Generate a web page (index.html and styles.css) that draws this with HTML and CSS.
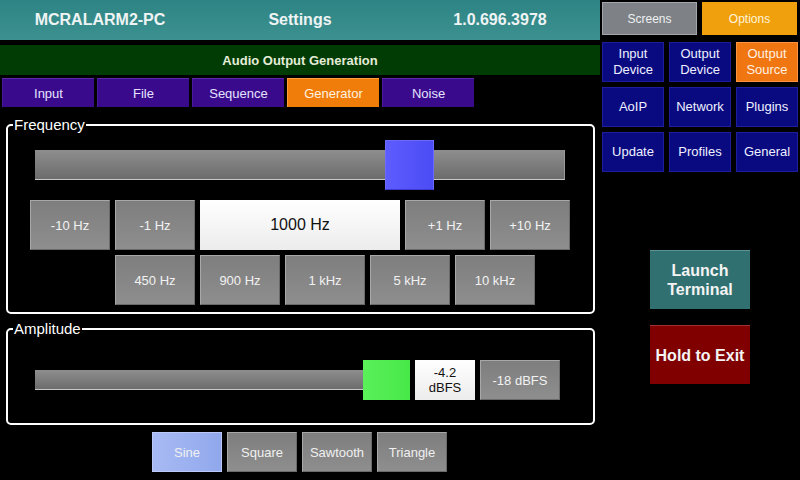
FILE: index.html
```html
<!DOCTYPE html>
<html>
<head>
<meta charset="utf-8">
<link rel="stylesheet" href="styles.css">
</head>
<body>
<div class="screen">
  <div class="left">
    <div class="header">
      <div class="hcell">MCRALARM2-PC</div>
      <div class="hcell">Settings</div>
      <div class="hcell">1.0.696.3978</div>
    </div>
    <div class="subtitle">Audio Output Generation</div>
    <div class="tabs">
      <div class="tab">Input</div>
      <div class="tab">File</div>
      <div class="tab">Sequence</div>
      <div class="tab active">Generator</div>
      <div class="tab">Noise</div>
    </div>
    <fieldset class="group freq">
      <legend>Frequency</legend>
      <div class="slider freq-slider">
        <div class="track"></div>
        <div class="thumb blue" style="left:350px"></div>
      </div>
      <div class="btn-row row1">
        <div class="gbtn">-10 Hz</div>
        <div class="gbtn">-1 Hz</div>
        <div class="valbox">1000 Hz</div>
        <div class="gbtn">+1 Hz</div>
        <div class="gbtn">+10 Hz</div>
      </div>
      <div class="btn-row row2">
        <div class="gbtn">450 Hz</div>
        <div class="gbtn">900 Hz</div>
        <div class="gbtn">1 kHz</div>
        <div class="gbtn">5 kHz</div>
        <div class="gbtn">10 kHz</div>
      </div>
    </fieldset>
    <fieldset class="group amp">
      <legend>Amplitude</legend>
      <div class="amp-row">
        <div class="slider amp-slider">
          <div class="track"></div>
          <div class="thumb green"></div>
        </div>
        <div class="dbbox">-4.2<br>dBFS</div>
        <div class="gbtn db">-18 dBFS</div>
      </div>
    </fieldset>
    <div class="waves">
      <div class="wbtn sel">Sine</div>
      <div class="wbtn">Square</div>
      <div class="wbtn">Sawtooth</div>
      <div class="wbtn">Triangle</div>
    </div>
  </div>
  <div class="right">
    <div class="topbtns">
      <div class="tbtn screens">Screens</div>
      <div class="tbtn options">Options</div>
    </div>
    <div class="grid">
      <div class="nbtn">Input<br>Device</div>
      <div class="nbtn">Output<br>Device</div>
      <div class="nbtn on">Output<br>Source</div>
      <div class="nbtn">AoIP</div>
      <div class="nbtn">Network</div>
      <div class="nbtn">Plugins</div>
      <div class="nbtn">Update</div>
      <div class="nbtn">Profiles</div>
      <div class="nbtn">General</div>
    </div>
    <div class="actions">
      <div class="abtn launch">Launch<br>Terminal</div>
      <div class="abtn exit">Hold to Exit</div>
    </div>
  </div>
</div>
</body>
</html>
```

FILE: styles.css
```css
* { box-sizing: border-box; }
html, body {
  margin: 0;
  padding: 0;
  background: #000;
}
body {
  font-family: "Liberation Sans", Arial, sans-serif;
  color: #fff;
}
.screen {
  width: 800px;
  height: 480px;
  display: flex;
  overflow: hidden;
  background: #000;
}
.left {
  width: 600px;
  display: flex;
  flex-direction: column;
}
.header {
  height: 40px;
  display: grid;
  grid-template-columns: 200px 200px 200px;
  background: linear-gradient(#2e8484, #3c9090);
}
.hcell {
  display: flex;
  align-items: center;
  justify-content: center;
  font-weight: bold;
  font-size: 16px;
  color: #eef4f4;
}
.subtitle {
  margin-top: 5px;
  height: 30px;
  background: #003c04;
  display: flex;
  align-items: center;
  justify-content: center;
  font-weight: bold;
  font-size: 13px;
  color: #e6ecd8;
}
.tabs {
  margin-top: 3px;
  height: 29px;
  display: flex;
  gap: 3px;
  padding-left: 2px;
}
.tab {
  width: 92px;
  background: #3a0a8c;
  border-top: 1px solid #5a2aa8;
  border-left: 1px solid #4a1a9c;
  display: flex;
  align-items: center;
  justify-content: center;
  font-size: 13px;
  color: #e4e4ff;
}
.tab.active {
  background: #f07d0a;
  border-top-color: #ffa040;
  border-left-color: #ff9a38;
  color: #fff2e0;
}
.group {
  margin: 0 0 0 6px;
  width: 589px;
  border: 2px solid #fff;
  border-radius: 5px;
  padding: 0;
  min-inline-size: 0;
}
.group legend {
  font-size: 15px;
  line-height: 16px;
  padding: 0 1px;
  margin-left: 5px;
  color: #fff;
}
.freq {
  margin-top: 10px;
  height: 197px;
}
.slider {
  position: relative;
}
.freq-slider {
  margin: 7px 0 0 27px;
  width: 530px;
  height: 50px;
  display: flex;
  align-items: center;
}
.track {
  width: 100%;
  background: linear-gradient(#8e8e8e, #6c6c6c);
  border-bottom: 1px solid #c8c8c8;
  border-right: 1px solid #9a9a9a;
}
.freq-slider .track { height: 30px; }
.thumb {
  position: absolute;
  top: 0;
}
.thumb.blue {
  width: 49px;
  height: 50px;
  background: linear-gradient(90deg, #5c5cff, #4c4cf4);
  border: 1px solid #6a6aff;
  border-bottom-color: #3a3ad0;
}
.btn-row {
  display: flex;
  gap: 5px;
}
.row1 {
  margin: 10px 0 0 22px;
}
.row2 {
  margin: 5px 0 0 107px;
}
.gbtn {
  width: 80px;
  height: 50px;
  background: linear-gradient(#7e7e7e, #8e8e8e);
  border: 1px solid #a8a8a8;
  border-right-color: #6a6a6a;
  border-bottom-color: #6a6a6a;
  display: flex;
  align-items: center;
  justify-content: center;
  font-size: 13px;
  color: #f2f2f2;
}
.valbox {
  width: 200px;
  height: 50px;
  background: linear-gradient(#ffffff, #ececec);
  display: flex;
  align-items: center;
  justify-content: center;
  font-size: 16px;
  color: #111;
}
.amp {
  margin-top: 7px;
  height: 104px;
}
.amp-row {
  margin: 23px 0 0 27px;
  display: flex;
  gap: 5px;
  height: 40px;
}
.amp-slider {
  width: 375px;
  height: 40px;
  display: flex;
  align-items: center;
}
.amp-slider .track { height: 20px; }
.thumb.green {
  right: 0;
  width: 47px;
  height: 40px;
  background: linear-gradient(90deg, #5af05a, #48e848);
}
.dbbox {
  width: 60px;
  height: 40px;
  background: linear-gradient(#ffffff, #ececec);
  color: #111;
  font-size: 13px;
  line-height: 15px;
  display: flex;
  align-items: center;
  justify-content: center;
  text-align: center;
}
.gbtn.db {
  height: 40px;
}
.waves {
  margin-top: 7px;
  display: flex;
  justify-content: center;
  gap: 5px;
  padding-right: 1px;
}
.wbtn {
  width: 70px;
  height: 40px;
  background: linear-gradient(#7e7e7e, #8e8e8e);
  border: 1px solid #a8a8a8;
  border-right-color: #6a6a6a;
  border-bottom-color: #6a6a6a;
  display: flex;
  align-items: center;
  justify-content: center;
  font-size: 13px;
  color: #f0f0f0;
}
.wbtn.sel {
  background: linear-gradient(90deg, #a8baf4, #90a8ec);
  border-color: #bcc8f8;
}
.right {
  width: 200px;
  padding: 2px 0 0 2px;
  display: flex;
  flex-direction: column;
}
.topbtns {
  display: flex;
  gap: 5px;
  height: 33px;
}
.tbtn {
  width: 95px;
  display: flex;
  align-items: center;
  justify-content: center;
  font-size: 12px;
}
.tbtn.screens {
  background: #7e8286;
  border: 1px solid #a2a6aa;
  color: #eef0f2;
}
.tbtn.options {
  background: #f0a00c;
  color: #fff4dc;
}
.grid {
  margin-top: 7px;
  display: grid;
  grid-template-columns: 62px 62px 62px;
  grid-auto-rows: 40px;
  gap: 5px;
}
.nbtn {
  background: #0a0a80;
  border: 1px solid #1e1e9c;
  display: flex;
  align-items: center;
  justify-content: center;
  text-align: center;
  font-size: 13px;
  line-height: 16px;
  color: #eef0ff;
}
.nbtn.on {
  background: #f07612;
  border-color: #ff9440;
  color: #fff0e0;
}
.actions {
  margin: 78px 0 0 48px;
  display: flex;
  flex-direction: column;
  gap: 16px;
}
.abtn {
  width: 100px;
  height: 59px;
  display: flex;
  align-items: center;
  justify-content: center;
  text-align: center;
  font-weight: bold;
  font-size: 16px;
  line-height: 19px;
  color: #f4f4f4;
}
.abtn.launch {
  background: #317070;
  border-top: 1px solid #5a9494;
}
.abtn.exit {
  background: #800000;
  border-top: 1px solid #a03030;
}
```
